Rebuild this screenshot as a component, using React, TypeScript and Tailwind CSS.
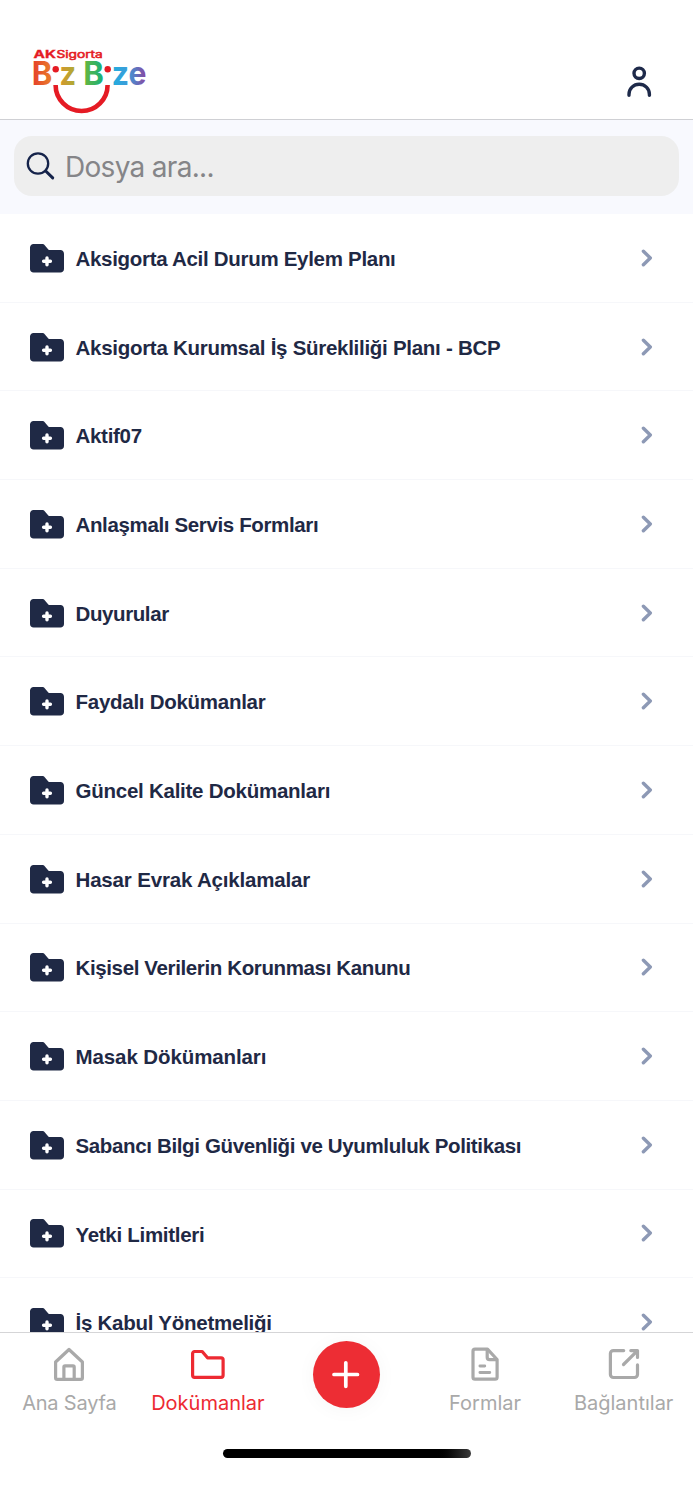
import React from 'react';
import clsx from 'clsx';

interface Folder {
  name: string;
  tracking: string;
}

const folders: Folder[] = [
  { name: 'Aksigorta Acil Durum Eylem Planı', tracking: 'tracking-[-0.3px]' },
  { name: 'Aksigorta Kurumsal İş Sürekliliği Planı - BCP', tracking: 'tracking-[-0.28px]' },
  { name: 'Aktif07', tracking: 'tracking-[-0.3px]' },
  { name: 'Anlaşmalı Servis Formları', tracking: 'tracking-[-0.36px]' },
  { name: 'Duyurular', tracking: 'tracking-[-0.4px]' },
  { name: 'Faydalı Dokümanlar', tracking: 'tracking-[-0.27px]' },
  { name: 'Güncel Kalite Dokümanları', tracking: 'tracking-[-0.25px]' },
  { name: 'Hasar Evrak Açıklamalar', tracking: 'tracking-[-0.17px]' },
  { name: 'Kişisel Verilerin Korunması Kanunu', tracking: 'tracking-[-0.37px]' },
  { name: 'Masak Dökümanları', tracking: 'tracking-[-0.1px]' },
  { name: 'Sabancı Bilgi Güvenliği ve Uyumluluk Politikası', tracking: 'tracking-[-0.36px]' },
  { name: 'Yetki Limitleri', tracking: 'tracking-[-0.3px]' },
  { name: 'İş Kabul Yönetmeliği', tracking: 'tracking-[-0.25px]' },
];

const Logo: React.FC = () => (
  <svg width="116" height="68" viewBox="32 48 116 68">
    <defs>
      <linearGradient id="rainbow" gradientUnits="userSpaceOnUse" x1="33" y1="0" x2="146" y2="0">
        <stop offset="0" stopColor="#e5402b" />
        <stop offset="0.14" stopColor="#e9762a" />
        <stop offset="0.26" stopColor="#cf9a2e" />
        <stop offset="0.37" stopColor="#aeaa35" />
        <stop offset="0.47" stopColor="#5fb544" />
        <stop offset="0.6" stopColor="#1fb173" />
        <stop offset="0.73" stopColor="#27aadf" />
        <stop offset="0.84" stopColor="#3d9bd8" />
        <stop offset="1" stopColor="#8a46a0" />
      </linearGradient>
    </defs>
    <g fill="#e51b24" stroke="#e51b24" fontFamily="Inter, sans-serif" fontSize="9.8">
      <text x="33.6" y="58" fontWeight="700" strokeWidth="0.3" textLength="22.4" lengthAdjust="spacingAndGlyphs">AK</text>
      <text x="56.4" y="58" strokeWidth="0.5" textLength="46.4" lengthAdjust="spacingAndGlyphs">Sigorta</text>
    </g>
    <g fill="url(#rainbow)" fontFamily="Inter, sans-serif" fontWeight="700" fontSize="33">
      <text x="31.7" y="85" textLength="20.6" lengthAdjust="spacingAndGlyphs">B</text>
      <text x="59.6" y="85" textLength="16.6" lengthAdjust="spacingAndGlyphs">z</text>
      <text x="83.3" y="85" textLength="20.6" lengthAdjust="spacingAndGlyphs">B</text>
      <text x="111.8" y="85" textLength="34.6" lengthAdjust="spacingAndGlyphs">ze</text>
    </g>
    <circle cx="55.7" cy="69.3" r="3.2" fill="#e51b24" />
    <circle cx="107.7" cy="69.3" r="3.2" fill="#e51b24" />
    <path d="M55.6 85a26 26 0 0 0 52 0" fill="none" stroke="#e51b24" strokeWidth="4.6" />
  </svg>
);

const UserIcon: React.FC = () => (
  <svg width="26" height="32" viewBox="0 0 26 32" fill="none" stroke="#1e2a4a" strokeWidth="3.4" strokeLinecap="round">
    <circle cx="13.2" cy="7.3" r="5.2" />
    <path d="M3 29.2v-1a10.1 9.9 0 0 1 20.4 0v1" />
  </svg>
);

const SearchIcon: React.FC = () => (
  <svg width="30" height="30" viewBox="0 0 30 30" fill="none" stroke="#15234a" strokeLinecap="round">
    <circle cx="12" cy="12.5" r="10.2" strokeWidth="2.3" />
    <path d="M19.7 20l7 6.9" strokeWidth="3" />
  </svg>
);

const FolderPlusIcon: React.FC = () => (
  <svg width="34" height="30" viewBox="0 0 34 30" className="shrink-0">
    <path
      d="M3.6 1h8.7c1 0 1.6.3 2.2 1l3.600 4.300c.5.6 1 .8 1.800.8h10.500c2.100 0 3.600 1.500 3.600 3.600v15.200c0 2.100-1.500 3.600-3.600 3.600H3.600C1.500 29.500 0 28 0 25.900V4.600C0 2.500 1.500 1 3.600 1z"
      fill="#1f2945"
    />
    <path d="M17 14.900v6.800M13.600 18.300h6.800" stroke="#fff" strokeWidth="3.4" strokeLinecap="round" />
  </svg>
);

const ChevronIcon: React.FC = () => (
  <svg width="12" height="18" viewBox="0 0 12 18" fill="none" stroke="#8d99b5" strokeWidth="3.4" strokeLinecap="round" strokeLinejoin="round">
    <path d="M2.4 2.2l6.9 6.8-6.9 6.8" />
  </svg>
);

const iconProps = {
  width: 36,
  height: 36,
  viewBox: '0 0 36 36',
  fill: 'none',
  stroke: 'currentColor',
  strokeWidth: 3.2,
  strokeLinecap: 'round',
  strokeLinejoin: 'round',
} as const;

const HomeIcon: React.FC = () => (
  <svg {...iconProps}>
    <path d="M4.600 15L18 2.500 31.400 15v15.700a1.600 1.600 0 0 1-1.600 1.600H6.200a1.600 1.600 0 0 1-1.600-1.600z" />
    <path d="M12.900 31.600V20a1.200 1.200 0 0 1 1.200-1.200h7.900a1.200 1.200 0 0 1 1.200 1.200v11.600" />
  </svg>
);

const FolderIcon: React.FC = () => (
  <svg {...iconProps}>
    <path d="M4.600 4.500h7.600l5.300 6.300h13.600a2 2 0 0 1 2 2v15.500a2 2 0 0 1-2 2H4.600a2 2 0 0 1-2-2V6.500a2 2 0 0 1 2-2z" />
  </svg>
);

const FormIcon: React.FC = () => (
  <svg {...iconProps}>
    <path d="M8 2.200h12.500l9.600 10.300v17.700a2 2 0 0 1-2 2H8a2 2 0 0 1-2-2v-26a2 2 0 0 1 2-2z" />
    <path d="M20.200 3v7.300a2.300 2.300 0 0 0 2.300 2.300h7" />
    <path d="M12.900 19h4.900M12.900 25.500h9.900" strokeWidth="2.8" />
  </svg>
);

const LinkIcon: React.FC = () => (
  <svg {...iconProps}>
    <path d="M17.700 3.600H7.400a3 3 0 0 0-3 3v20.900a3 3 0 0 0 3 3h21.100a3 3 0 0 0 3-3v-9.600" />
    <path d="M24.800 3.600h6.700v6.900M30.500 4.600l-13 12.900" />
  </svg>
);

interface TabProps {
  label: string;
  icon: React.ReactNode;
  active?: boolean;
  labelClass?: string;
}

const Tab: React.FC<TabProps> = ({ label, icon, active, labelClass }) => (
  <button className={clsx('flex flex-1 basis-0 flex-col items-center pt-[14px]', active ? 'text-[#ed2a32]' : 'text-[#a9a9a9]')}>
    {icon}
    <span className={clsx('mt-[7px] whitespace-nowrap font-[Inter,sans-serif] text-[20px] leading-[26px]', labelClass)}>{label}</span>
  </button>
);

const App: React.FC = () => {
  return (
    <div className="flex h-[1500px] w-full flex-col overflow-hidden bg-white text-[#1f2945]">
      {/* Header */}
      <header className="flex h-[120px] shrink-0 justify-between border-b border-[#cfd0d4] pl-8 pr-[41px]">
        <div className="pt-12">
          <Logo />
        </div>
        <button className="self-start pt-[66px]">
          <UserIcon />
        </button>
      </header>

      {/* Search */}
      <div className="h-[94px] shrink-0 bg-[#f8f9fe] px-[14px] pt-4">
        <div className="flex h-[60px] items-center gap-[9px] rounded-[18px] bg-[#eeeeee] pl-3">
          <SearchIcon />
          <input
            className="min-w-0 flex-1 bg-transparent pt-0.5 font-[Inter,sans-serif] text-[28px] tracking-[-0.7px] outline-none placeholder:text-[#858588]"
            placeholder="Dosya ara..."
          />
        </div>
      </div>

      {/* Folder list */}
      <main className="min-h-0 flex-1 overflow-hidden">
        {folders.map(folder => (
          <div key={folder.name} className="flex h-[88.7px] items-center border-b border-[#f6f7fa] pl-[30px] pr-10">
            <FolderPlusIcon />
            <span
              className={clsx(
                "ml-[11.5px] flex-1 whitespace-nowrap pt-[3px] font-['Liberation_Sans',Arial,sans-serif] text-[20.5px] font-bold",
                folder.tracking
              )}
            >
              {folder.name}
            </span>
            <ChevronIcon />
          </div>
        ))}
      </main>

      {/* Tab bar */}
      <nav className="h-[168.5px] shrink-0 border-t border-[#d5d5d7] bg-white">
        <div className="flex h-[116.5px]">
          <Tab label="Ana Sayfa" icon={<HomeIcon />} labelClass="tracking-[-0.2px]" />
          <Tab label="Dokümanlar" icon={<FolderIcon />} active />
          <div className="flex flex-1 basis-0 justify-center pt-2">
            <button className="flex size-[67px] items-center justify-center rounded-full bg-[#ed2d34] shadow-[0_2px_20px_rgba(0,0,0,0.04)]">
              <svg width="30" height="30" viewBox="0 0 30 30" stroke="#fff" strokeWidth="3.7" strokeLinecap="round">
                <path d="M14.800 3.800v23.500M3 15.500h23.500" />
              </svg>
            </button>
          </div>
          <Tab label="Formlar" icon={<FormIcon />} />
          <Tab label="Bağlantılar" icon={<LinkIcon />} />
        </div>
        <div className="mx-auto h-[9px] w-[248px] rounded-full bg-linear-to-r from-black from-85% to-[#3a3a3a]" />
      </nav>
    </div>
  );
};

export default App;
